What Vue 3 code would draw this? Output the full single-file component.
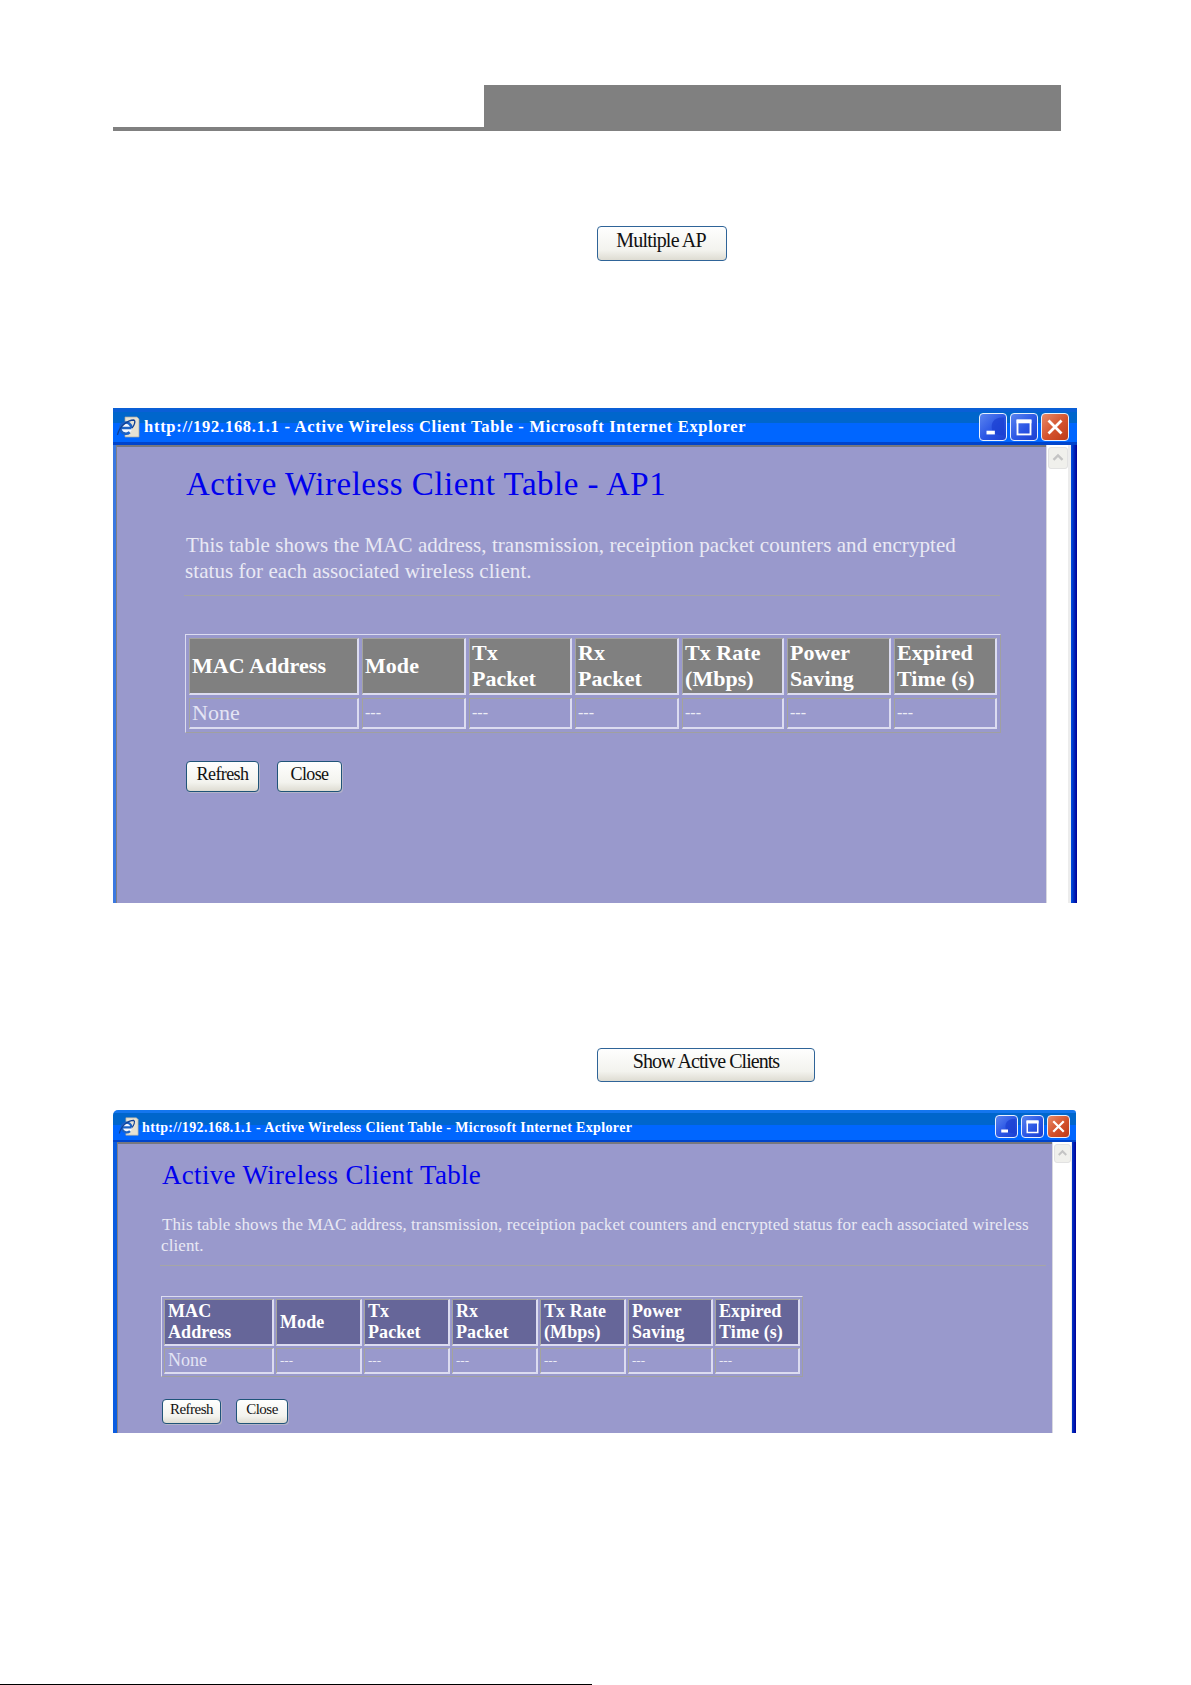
<script setup>
const columns = ['MAC Address', 'Mode', 'Tx Packet', 'Rx Packet', 'Tx Rate (Mbps)', 'Power Saving', 'Expired Time (s)']

const windows = [
  {
    id: 'a',
    buttonLabel: 'Multiple AP',
    title: 'Active Wireless Client Table - AP1',
    lines: [
      'This table shows the MAC address, transmission, receiption packet counters and encrypted',
      'status for each associated wireless client.',
    ],
    widths: [170, 104, 103, 104, 102, 104, 103],
    heads: [['MAC Address'], ['Mode'], ['Tx', 'Packet'], ['Rx', 'Packet'], ['Tx Rate', '(Mbps)'], ['Power', 'Saving'], ['Expired', 'Time (s)']],
  },
  {
    id: 'b',
    buttonLabel: 'Show Active Clients',
    title: 'Active Wireless Client Table',
    lines: [
      'This table shows the MAC address, transmission, receiption packet counters and encrypted status for each associated wireless',
      'client.',
    ],
    widths: [110, 86, 86, 86, 86, 85, 85],
    heads: [['MAC', 'Address'], ['Mode'], ['Tx', 'Packet'], ['Rx', 'Packet'], ['Tx Rate', '(Mbps)'], ['Power', 'Saving'], ['Expired', 'Time (s)']],
  },
]
const caption = 'http://192.168.1.1 - Active Wireless Client Table - Microsoft Internet Explorer'
</script>

<template>
  <div class="page">
    <header class="head">
      <div class="head-rule"></div>
      <div class="head-block"></div>
    </header>

    <section v-for="w in windows" :key="w.id" class="sec" :class="'sec-' + w.id">
      <div class="trigger-row">
        <button class="xp-btn trigger" type="button">{{ w.buttonLabel }}</button>
      </div>

      <div class="win">
        <div class="titlebar">
          <svg class="ie" viewBox="0 0 24 24">
            <path d="M9 2h12l2 2v18H9z" fill="#e6e2d4" stroke="#a8a89c" stroke-width=".7" />
            <circle cx="10" cy="13" r="6" fill="#f4f8ff" />
            <path d="M15.5 13H5M15.5 13a5.6 5.6 0 1 0-1.8 4.2" fill="none" stroke="#1c62c4" stroke-width="2.6" />
            <path d="M1.5 20C3 12 11 5 18 5c2 1 0 6-2 8" fill="none" stroke="#0f3f94" stroke-width="1.3" />
          </svg>
          <span class="caption">{{ caption }}</span>
          <div class="controls">
            <span class="ctl ctl-min">
              <svg viewBox="0 0 28 28">
                <path d="M26 4C16 3 11 9 13 17c1 4 5 6 13 6z" fill="#1b3fd0" opacity=".7" />
                <rect x="7" y="18" width="9" height="4" fill="#fff" />
              </svg>
            </span>
            <span class="ctl ctl-max">
              <svg viewBox="0 0 28 28">
                <rect x="7" y="7" width="14" height="15" fill="none" stroke="#fff" stroke-width="2" />
                <rect x="6" y="6" width="16" height="4" fill="#fff" />
              </svg>
            </span>
            <span class="ctl ctl-close">
              <svg viewBox="0 0 28 28">
                <path d="M7 7l14 14M21 7L7 21" stroke="#fff" stroke-width="3" />
              </svg>
            </span>
          </div>
        </div>

        <div class="frame">
          <div class="content">
            <h1 class="title">{{ w.title }}</h1>
            <p class="intro">
              <span v-for="(line, i) in w.lines" :key="i" class="intro-line">{{ line }}</span>
            </p>
            <div class="divider"></div>
            <table class="clients" :aria-label="w.title">
              <colgroup>
                <col v-for="(cw, i) in w.widths" :key="i" :style="{ width: cw + 'px' }" />
              </colgroup>
              <thead>
                <tr>
                  <th v-for="(h, i) in w.heads" :key="i" :title="columns[i]">
                    <span v-for="part in h" :key="part" class="th-line">{{ part }}</span>
                  </th>
                </tr>
              </thead>
              <tbody>
                <tr>
                  <td class="none">None</td>
                  <td v-for="n in 6" :key="n" class="dash">---</td>
                </tr>
              </tbody>
            </table>
            <div class="actions">
              <button class="xp-btn refresh" type="button">Refresh</button>
              <button class="xp-btn close" type="button">Close</button>
            </div>
          </div>
          <div class="scroll">
            <span class="scroll-up">
              <svg viewBox="0 0 20 22"><path d="M5 13l5-5 5 5" fill="none" stroke="#c4c4c4" stroke-width="2.6" /></svg>
            </span>
          </div>
        </div>
      </div>
    </section>

    <div class="foot-rule"></div>
  </div>
</template>

<style>
html, body { margin: 0; background: #fff; }
</style>

<style scoped>
.page {
  position: relative;
  width: 1191px;
  height: 1685px;
  overflow: hidden;
  background: #fff;
  font-family: "Liberation Serif", serif;
}
.head {
  display: flex;
  align-items: flex-end;
  width: 948px;
  height: 46px;
  margin: 85px 0 0 113px;
}
.head-rule { width: 371px; height: 4px; background: #808080; }
.head-block { width: 577px; height: 46px; background: #808080; }

.sec-a { margin-top: 95px; }
.sec-b { margin-top: 145px; }

.trigger-row { padding-left: 597px; display: flex; }
.xp-btn {
  display: block;
  box-sizing: border-box;
  padding: 0;
  margin: 0;
  border: 1.5px solid #2f6498;
  border-radius: 4px;
  background: linear-gradient(#fefefe 0%, #f3f3ee 70%, #dedcd2 100%);
  color: #111;
  font-family: "Liberation Serif", serif;
  text-align: center;
  white-space: nowrap;
}
.trigger { height: 35px; font-size: 20px; letter-spacing: -0.8px; padding-bottom: 6px; }
.sec-a .trigger { width: 130px; padding-right: 2px; }
.sec-b .trigger { width: 218px; height: 34px; padding-bottom: 7px; letter-spacing: -0.95px; }

.win { margin-left: 113px; display: flex; flex-direction: column; }
.sec-a .win { width: 964px; height: 495px; margin-top: 147px; }
.sec-b .win { width: 963px; height: 323px; margin-top: 28px; border-radius: 5px 3px 0 0; overflow: hidden; }

.titlebar {
  display: flex;
  align-items: center;
  flex: none;
  box-sizing: border-box;
  position: relative;
}
.sec-a .titlebar {
  height: 37px;
  background: linear-gradient(#0a5fd6 0, #0a5fd6 4px, #0066cc 4px, #0066cc 15px, #0066ff 15px, #0066ff 34px, #0044cc 34px);
}
.sec-b .titlebar {
  height: 32px;
  background: linear-gradient(#1476ee 0, #1476ee 3px, #0066cc 3px, #0066cc 15px, #0066ff 15px, #0066ff 30px, #0044cc 30px);
}
.ie { flex: none; }
.sec-a .ie { width: 24px; height: 24px; margin-left: 3px; }
.sec-b .ie { width: 21px; height: 21px; margin-left: 5px; }
.caption {
  color: #fff;
  font-weight: 700;
  white-space: nowrap;
}
.sec-a .caption { font-size: 16.5px; letter-spacing: 0.73px; margin-left: 4px; }
.sec-b .caption { font-size: 14px; letter-spacing: 0.355px; margin-left: 3px; padding-top: 4px; }
.controls { margin-left: auto; display: flex; }
.sec-a .controls { gap: 3px; margin-right: 8px; }
.sec-b .controls { gap: 3px; margin-right: 6px; }
.ctl {
  display: block;
  box-sizing: border-box;
  border: 1px solid #e8f0ff;
  border-radius: 4px;
  background: linear-gradient(135deg, #5a84f0, #2a55e4 55%, #1c3fd0);
}
.sec-a .ctl { width: 28px; height: 28px; }
.sec-b .ctl { width: 23px; height: 23px; }
.ctl svg { display: block; width: 100%; height: 100%; }
.ctl-close { background: linear-gradient(135deg, #e88a68, #d3512c 55%, #bc3a18); }

.frame {
  flex: 1;
  display: flex;
  min-height: 0;
  background: linear-gradient(to right, #0050e0 calc(100% - 6px), #000099 100%);
}
.sec-a .frame { padding-right: 6px; border-left: 3px solid #3a78e0; }
.sec-b .frame { padding-right: 4px; border-left: 4px solid #0a5ce0; }

.content {
  flex: 1;
  min-width: 0;
  background: #9999cc;
  border-top: 2px solid #77777f;
  border-left: 1px solid #808088;
  box-sizing: border-box;
  overflow: hidden;
}
.sec-a .content { padding-left: 68px; }
.sec-b .content { padding-left: 43px; }

.scroll {
  flex: none;
  box-sizing: border-box;
  background: #fff;
  border-left: 1px solid #d8d8e0;
  border-right: 3px solid #ececec;
}
.sec-a .scroll { width: 25px; padding: 2px 0 0 1px; }
.sec-b .scroll { width: 20px; padding: 2px 0 0 1px; border-right-width: 1px; }
.scroll-up {
  display: block;
  width: 20px;
  height: 22px;
  box-sizing: border-box;
  background: #f0f0ec;
  border: 1px solid #e2e2e2;
  border-radius: 3px;
}
.sec-b .scroll-up { width: 17px; height: 19px; }
.scroll-up svg { display: block; width: 100%; height: 100%; }

.title { margin: 0; color: #0000ee; font-weight: 400; white-space: nowrap; }
.sec-a .title { font-size: 33px; line-height: 40px; margin-top: 17px; margin-left: 1px; letter-spacing: 0.49px; }
.sec-b .title { font-size: 27px; line-height: 34px; margin-top: 14px; margin-left: 1px; letter-spacing: 0.32px; }

.intro { margin: 0; color: #e9e9f4; }
.intro-line { display: block; white-space: nowrap; }
.sec-a .intro { font-size: 21px; line-height: 26px; margin-top: 28px; }
.sec-a .intro-line { letter-spacing: 0.06px; }
.sec-a .intro-line:first-child { margin-left: 1px; }
.sec-b .intro { font-size: 17px; line-height: 21px; margin-top: 22px; }
.sec-b .intro-line { letter-spacing: 0.09px; }
.sec-b .intro-line:first-child { margin-left: 1px; }

.divider { height: 1px; background: #a6a6a6; }
.sec-a .divider { width: 816px; margin: 11px 0 0 -1px; }
.sec-b .divider { width: 886px; margin: 9px 0 0 -1px; }

.clients {
  table-layout: fixed;
  border-collapse: separate;
  border-style: solid;
  border-width: 1px;
  border-color: #dcdcf0 #a0a0a0 #a0a0a0 #dcdcf0;
  color: #fff;
}
.sec-a .clients { border-spacing: 3px; margin-top: 38px; width: 816px; }
.sec-b .clients { border-spacing: 2px; margin-top: 30px; width: 642px; }

.clients th, .clients td {
  box-sizing: border-box;
  padding: 0 0 0 3px;
  text-align: left;
  vertical-align: middle;
  border-style: solid;
  border-width: 1px 2px 2px 1px;
  border-color: #a4a49c #dcdcf0 #dcdcf0 #a4a49c;
  white-space: nowrap;
}
.sec-a .clients th, .sec-a .clients td { padding-left: 2px; }
.clients th { font-weight: 700; }
.sec-a .clients th { background: #808080; height: 57px; font-size: 22px; line-height: 26px; letter-spacing: 0.05px; }
.sec-b .clients th { background: #666699; height: 47px; font-size: 18px; line-height: 21px; letter-spacing: 0.1px; }
.th-line { display: block; }
.sec-a .clients td { height: 31px; }
.sec-b .clients td { height: 26px; }
.none { color: #e4e4f4; }
.sec-a .none { font-size: 22px; }
.sec-b .none { font-size: 18px; }
.dash { color: #ececf6; vertical-align: top; }
.sec-a .dash { font-size: 16px; line-height: 24px; }
.sec-b .dash { font-size: 13px; line-height: 20px; }

.actions { display: flex; }
.sec-a .actions { margin-top: 28px; margin-left: 1px; gap: 18px; }
.sec-b .actions { margin-top: 22px; margin-left: 1px; gap: 15px; }
.sec-a .refresh { width: 73px; height: 31px; }
.sec-a .close { width: 65px; height: 31px; }
.sec-b .refresh { width: 59px; height: 25px; }
.sec-b .close { width: 52px; height: 25px; }
.actions .xp-btn { box-shadow: 1px 1px 0 #b4b4c8; border-color: #1f5478; }
.sec-a .actions .xp-btn { font-size: 18px; letter-spacing: -0.6px; padding-bottom: 5px; }
.sec-b .actions .xp-btn { font-size: 15px; letter-spacing: -0.5px; padding-bottom: 4px; }

.foot-rule {
  position: absolute;
  left: 0;
  bottom: 0;
  width: 592px;
  height: 1px;
  background: #000;
}
</style>
